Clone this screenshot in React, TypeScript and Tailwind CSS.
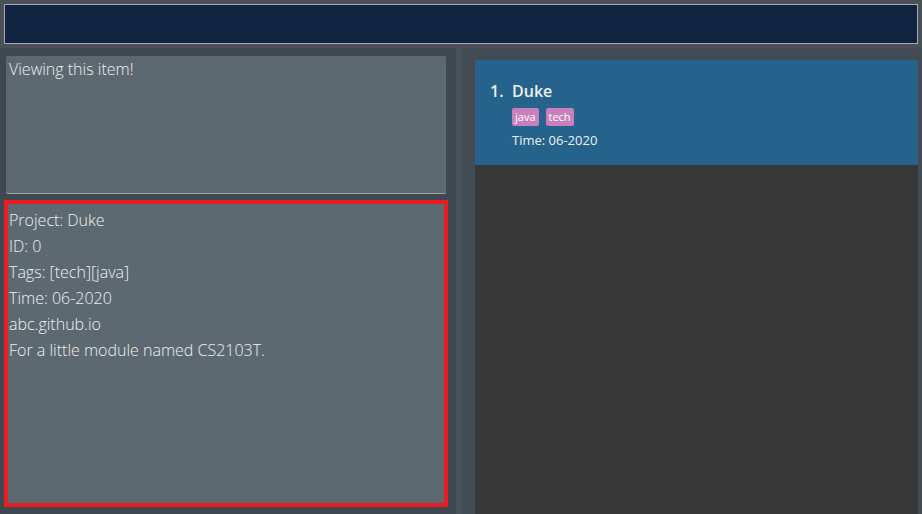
const DETAILS = [
  'Project: Duke',
  'ID: 0',
  'Tags: [tech][java]',
  'Time: 06-2020',
  'abc.github.io',
  'For a little module named CS2103T.',
]

export default function App() {
  return (
    <div
      className="w-[922px] h-[514px] flex flex-col bg-[#464f57] text-[#f0f0f0] overflow-hidden"
      style={{ fontFamily: '"Open Sans", "Noto Sans", sans-serif' }}
    >
      {/* command box */}
      <div className="h-[48px] px-[4px] pt-[4px] bg-[#48515a]">
        <div className="h-[40px] bg-[#0f2440] border border-[#a9a9a9]" />
      </div>

      <div className="flex flex-1 min-h-0">
        {/* left: result + detail */}
        <div className="w-[456px] bg-[#3f4851] flex flex-col pl-[4px] pr-[8px] pt-[8px] pb-[7px]">
          <div className="mx-[2px] h-[138px] bg-[#5d6971] rounded-[2px] border-b border-[#9aa2a8] px-[3px] pt-[1px] text-[16px] font-light">
            Viewing this item!
          </div>
          <div className="mt-[6px] flex-1 border-[4px] border-[#ec1c24] bg-[#5d6971] px-[1px] pt-[3px] text-[16px] font-light leading-[26px]">
            {DETAILS.map((line) => (
              <div key={line}>{line}</div>
            ))}
          </div>
        </div>

        <div className="w-[6px] bg-[#4a535b]" />

        {/* right: list */}
        <div className="flex-1 bg-[#434c54] pl-[13px] pr-[4px] pt-[12px] flex flex-col">
          <div className="h-[105px] bg-[#25628c] rounded-t-[2px] pl-[15px] pt-[20px]">
            <div className="flex items-center text-[16px] font-semibold leading-[22px]">
              <span className="w-[22px]">1.</span>
              <span>Duke</span>
            </div>
            <div className="flex gap-[7px] ml-[22px] mt-[6px]">
              {['java', 'tech'].map((t) => (
                <span
                  key={t}
                  className="bg-[#c97fbc] text-white text-[11px] leading-[18px] px-[3px] rounded-[2px]"
                >
                  {t}
                </span>
              ))}
            </div>
            <div className="ml-[22px] mt-[4px] text-[13px] leading-[20px]">Time: 06-2020</div>
          </div>
          <div className="flex-1 bg-[#383838]" />
        </div>
      </div>
    </div>
  )
}
